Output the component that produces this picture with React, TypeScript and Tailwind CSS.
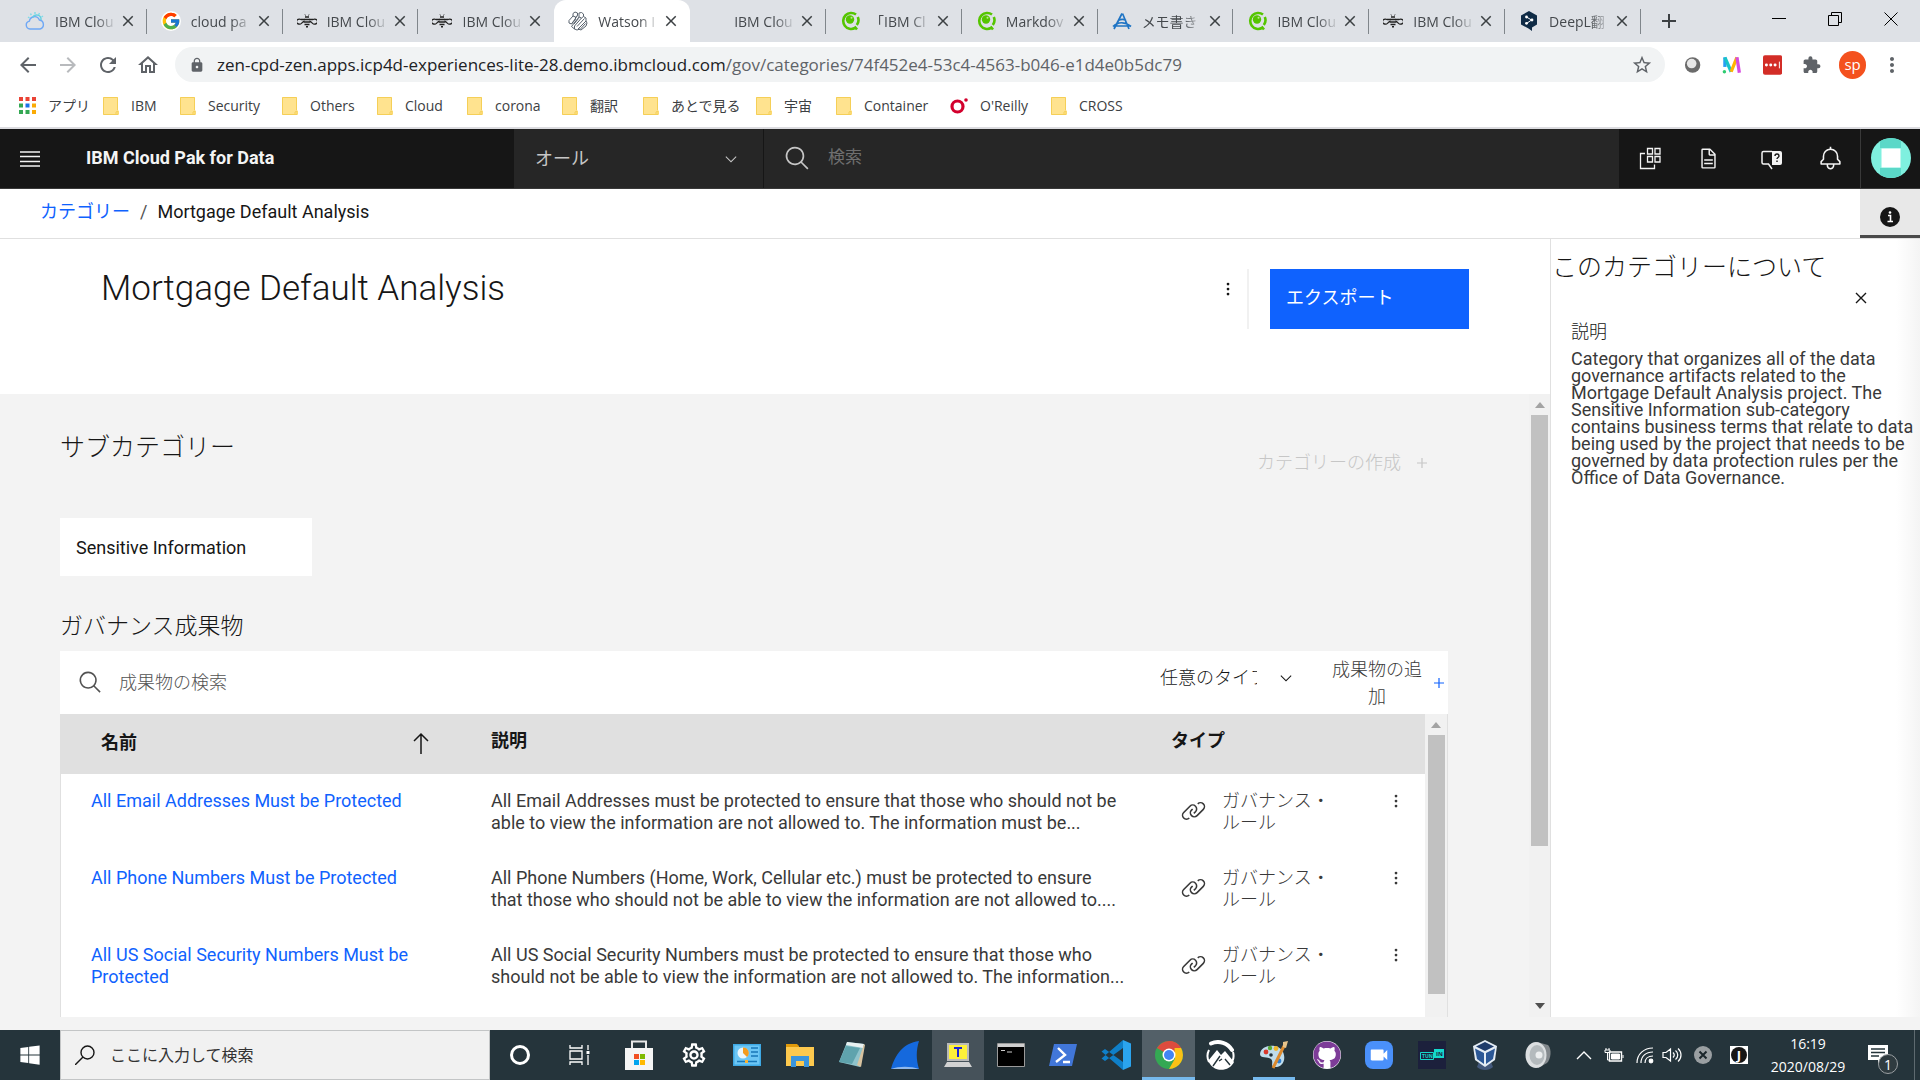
import { type ReactNode } from "react";
import { FaGithub, FaWindows } from "react-icons/fa";
import { FcGoogle } from "react-icons/fc";
import {
  MdArrowBack,
  MdArrowForward,
  MdClose,
  MdExtension,
  MdLock,
  MdMoreVert,
  MdOutlineHome,
  MdOutlineSettings,
  MdRefresh,
  MdStarBorder,
  MdVideocam,
} from "react-icons/md";

const CLOUD_ICON = (
  <svg viewBox="0 0 20 20" className="w-5 h-5" fill="none" strokeWidth="1.4">
    <path d="M5 18a4 4 0 0 1-.6-7.900A5.200 5.200 0 0 1 14.400 9 4.600 4.600 0 0 1 15 18z" stroke="#6fa8f5" />
    <path d="M7.500 6.500A4.500 4.500 0 0 1 16 9" stroke="#63d0e0" />
    <path d="M3 6l1.500 1M5.500 2.500l.8 1.600M10 1v2M14.500 2l-1 2M18 5l-1.500 1" stroke="#7fdbe6" />
  </svg>
);

const BEE_ICON = (
  <svg viewBox="0 0 20 20" className="w-5 h-5" fill="none" stroke="#222">
    <path d="M7.500 8.500H4A3 2.500 0 1 0 3.500 13C5 12.500 5 11 7.500 10M12.500 8.500H16A3 2.500 0 1 1 16.500 13C15 12.500 15 11 12.500 10" strokeWidth="1.300" />
    <path d="M8 6h4M7 8.500h6M6.500 11h7M7.500 13.500h5M9 15.800h2" strokeWidth="1.500" />
    <path d="M8.500 4.500L8 3.500M11.500 4.500l.5-1" />
  </svg>
);

const WATSON_ICON = (
  <svg viewBox="0 0 20 20" className="w-5 h-5" fill="none" stroke="#59636e">
    <path d="M5 2.500L7 1l2.500 1v2.500l-2 1.500L5 5zM11 2l2.500-.5 2 1.500v2.500l-2 1.500-2.500-1z" />
    <path d="M5 5L1 9.500V12l2.500 1 4-4.500V6M9.500 4.500l-6 8.500M13.500 7l-7 8v3l2.500 1 3-1M11 6l-7.500 9.500L6.500 18M15.500 5.500L18 7v3l-8 8" />
    <path d="M16.500 7.500L9 15.500M18 10l1 2-1 3-5 4-2.500-1M17.500 12.500l-5 5.500M10.500 7.500L6 13" />
  </svg>
);

const QIITA_ICON = (
  <svg viewBox="0 0 20 20" className="w-5 h-5" fill="none">
    <path d="M16 3.500A8 8 0 1 0 15 17M17.800 6a8 8 0 0 1-1 8M14.500 15.500l2.500 3" stroke="#55c500" strokeWidth="2.600" />
    <circle cx="10" cy="8.500" r="4.200" fill="#55c500" />
    <circle cx="11.500" cy="6.800" r="1" fill="#b6ea8c" />
  </svg>
);

const MEMO_ICON = (
  <svg viewBox="0 0 20 20" className="w-5 h-5" fill="none" stroke="#1f74c4" strokeWidth="1.700">
    <path d="M2 18L10 2.500M10.500 2.500L17 18M1 15.500C6 10.500 13 10.500 19 15.500M6 9.500c3-1.500 6-1.500 8 0M6.500 9.500L4 15h13" />
  </svg>
);

const DEEPL_ICON = (
  <svg viewBox="0 0 20 20" className="w-5 h-5">
    <path d="M10 0l8 4.500v9L13 16.500V20l-3.500-2.500L2 13.500v-9z" fill="#0f2b46" />
    <path d="M7.500 6l5 3-5 3.500" stroke="#fff" strokeWidth="1" fill="none" />
    <circle cx="7.500" cy="6" r="1.400" fill="#fff" />
    <circle cx="13" cy="9" r="1.400" fill="#fff" />
    <circle cx="7.500" cy="12.300" r="1.400" fill="#fff" />
  </svg>
);

const TABS: { title: string; icon: ReactNode; active?: boolean; divider?: boolean }[] = [
  { title: "IBM Clou", icon: CLOUD_ICON, divider: true },
  { title: "cloud pa", icon: <FcGoogle className="w-5 h-5 rounded-full bg-white" />, divider: true },
  { title: "IBM Clou", icon: BEE_ICON, divider: true },
  { title: "IBM Clou", icon: BEE_ICON },
  { title: "Watson I", icon: WATSON_ICON, active: true },
  { title: "IBM Clou", icon: null, divider: true },
  { title: "「IBM Cl", icon: QIITA_ICON, divider: true },
  { title: "Markdov", icon: QIITA_ICON, divider: true },
  { title: "メモ書き", icon: MEMO_ICON, divider: true },
  { title: "IBM Clou", icon: QIITA_ICON, divider: true },
  { title: "IBM Clou", icon: BEE_ICON, divider: true },
  { title: "DeepL翻", icon: DEEPL_ICON, divider: true },
];

function FolderIcon() {
  return (
    <svg viewBox="0 0 16 18" className="w-4 h-[18px]">
      <path d="M1 0h13a1 1 0 0 1 1 1v12l1 1v3a1 1 0 0 1-1 1H1a1 1 0 0 1-1-1V1a1 1 0 0 1 1-1z" fill="#ffe38f" />
      <path d="M.5.5h14v12.500M.5.500v17h14.500v-3.500l-2 1v2" stroke="#f5cf57" fill="none" />
    </svg>
  );
}

const APPS_ICON = (
  <svg viewBox="0 0 17 17" className="w-[17px] h-[17px]">
    <path d="M0 0h4v4H0zM6.500 0h4v4h-4zM13 0h4v4h-4z" fill="#ea4335" />
    <path d="M0 6.500h4v4H0zM0 13h4v4H0zM6.500 13h4v4h-4z" fill="#34a853" />
    <path d="M6.500 6.500h4v4h-4z" fill="#1a73e8" />
    <path d="M13 6.500h4v4h-4zM13 13h4v4h-4z" fill="#fbab05" />
  </svg>
);

const OREILLY_ICON = (
  <svg viewBox="0 0 18 18" className="w-[18px] h-[18px]">
    <circle cx="7.500" cy="9.500" r="5.500" fill="none" stroke="#d3002d" strokeWidth="3.200" />
    <circle cx="16" cy="3" r="1.800" fill="#d3002d" />
  </svg>
);

const BOOKMARKS = [
  { label: "アプリ", width: "w-[84px]", icon: APPS_ICON },
  { label: "IBM", width: "w-[77px]" },
  { label: "Security", width: "w-[102px]" },
  { label: "Others", width: "w-[95px]" },
  { label: "Cloud", width: "w-[90px]" },
  { label: "corona", width: "w-[95px]" },
  { label: "翻訳", width: "w-[81px]" },
  { label: "あとで見る", width: "w-[113px]" },
  { label: "宇宙", width: "w-[80px]" },
  { label: "Container", width: "w-[114px]" },
  { label: "O'Reilly", width: "w-[101px]", icon: OREILLY_ICON },
  { label: "CROSS", width: "w-[80px]" },
];

function TabStrip() {
  return (
    <div className="flex h-[42px] bg-[#dee1e6] pl-[11px]">
      <div className="flex flex-1 min-w-0">
        {TABS.map((tab, i) => (
          <div
            key={i}
            className={`relative flex flex-1 min-w-0 items-center pl-[14px] ${tab.active ? "bg-white rounded-t-xl" : ""}`}
          >
            <span className="w-5 h-5 shrink-0">{tab.icon}</span>
            <span className="ml-[10px] w-[62px] whitespace-nowrap text-[14px] text-[#45494d] [mask-image:linear-gradient(to_right,black_65%,transparent)]">
              {tab.title}
            </span>
            <button aria-label="Close tab" className="ml-[2px] shrink-0">
              <MdClose className="w-[18px] h-[18px] text-[#3c4043]" />
            </button>
            {tab.divider && <span className="absolute right-0 top-[9px] h-[25px] w-px bg-[#80868b]" />}
          </div>
        ))}
      </div>
      <div className="flex w-[279px] items-center">
        <button aria-label="New tab" className="ml-5">
          <svg viewBox="0 0 16 16" className="w-4 h-4">
            <path d="M8 1v14M1 8h14" stroke="#3c4043" strokeWidth="2" />
          </svg>
        </button>
        <div className="ml-auto mb-[5px] flex items-center gap-[42px] pr-[22px]">
          <button aria-label="Minimize">
            <svg viewBox="0 0 14 14" className="w-[14px] h-[14px]">
              <path d="M0 6.500h14" stroke="#000" />
            </svg>
          </button>
          <button aria-label="Restore">
            <svg viewBox="0 0 14 14" className="w-[14px] h-[14px]" fill="none" stroke="#000">
              <path d="M.5 3.500h10v10H.5zM3.500 3.500v-3h10v10h-3" />
            </svg>
          </button>
          <button aria-label="Close window">
            <svg viewBox="0 0 14 14" className="w-[14px] h-[14px]">
              <path d="M.5.5l13 13M13.500.5l-13 13" stroke="#000" />
            </svg>
          </button>
        </div>
      </div>
    </div>
  );
}

function Toolbar() {
  return (
    <div className="flex h-[45px] items-center bg-white pl-4 pr-4 text-[#5f6368]">
      <div className="flex w-[159px] items-center gap-4">
        <button aria-label="Back"><MdArrowBack className="w-6 h-6" /></button>
        <button aria-label="Forward"><MdArrowForward className="w-6 h-6 text-[#b8babd]" /></button>
        <button aria-label="Reload"><MdRefresh className="w-6 h-6" /></button>
        <button aria-label="Home"><MdOutlineHome className="w-6 h-6" /></button>
      </div>
      <div className="flex h-[35px] flex-1 items-center rounded-full bg-[#f1f3f4] pl-[14px] pr-3">
        <MdLock className="w-4 h-4 shrink-0" />
        <p className="ml-3 flex-1 whitespace-nowrap text-[17px]">
          <span className="text-[#202124]">zen-cpd-zen.apps.icp4d-experiences-lite-28.demo.ibmcloud.com</span>
          /gov/categories/74f452e4-53c4-4563-b046-e1d4e0b5dc79
        </p>
        <button aria-label="Bookmark"><MdStarBorder className="w-[22px] h-[22px]" /></button>
      </div>
      <div className="flex w-[239px] items-center pl-[18px]">
        <svg viewBox="0 0 20 20" className="w-5 h-5">
          <circle cx="10" cy="10" r="8" fill="#6b6b6b" />
          <circle cx="9" cy="8.500" r="5" fill="#e8e8e8" />
        </svg>
        <svg viewBox="0 0 20 20" className="ml-5 w-5 h-5" fill="none" strokeWidth="3.400">
          <path d="M3 12V2" stroke="#2a9df4" />
          <path d="M3 2l6.500 15" stroke="#18c3c9" />
          <path d="M9.500 17L15.500 2" stroke="#ffb300" />
          <path d="M15.500 2l2.500 16" stroke="#d64be0" />
          <circle cx="2.500" cy="17" r="1.800" fill="#2ecc71" />
        </svg>
        <svg viewBox="0 0 20 20" className="ml-[21px] w-5 h-5">
          <rect width="20" height="20" rx="2" fill="#d32d27" />
          <path d="M3.500 10h.1M8 10h.1M12.500 10h.1" stroke="#fff" strokeWidth="3" strokeLinecap="round" />
          <path d="M17 6.500v7" stroke="#fff" />
        </svg>
        <MdExtension className="ml-5 w-5 h-5" />
        <span className="ml-[18px] flex w-7 h-7 items-center justify-center rounded-full bg-[#f4511e] pb-px text-[15px] text-white">sp</span>
        <button aria-label="Menu" className="ml-[14px]"><MdMoreVert className="w-6 h-6" /></button>
      </div>
    </div>
  );
}

function BookmarksBar() {
  return (
    <div className="flex h-[42px] items-center border-b-2 border-[#dcdce0] bg-white pb-[3px] pl-[19px]">
      {BOOKMARKS.map((b) => (
        <a
          key={b.label}
          href="#"
          className={`flex shrink-0 items-center gap-3 whitespace-nowrap text-[14px] text-[#3c4043] ${b.width}`}
        >
          {b.icon ?? <FolderIcon />}
          {b.label}
        </a>
      ))}
    </div>
  );
}

function SearchIcon({ className }: { className: string }) {
  return (
    <svg viewBox="0 0 32 32" fill="currentColor" className={className}>
      <path d="M29 27.586l-7.552-7.552a11.018 11.018 0 1 0-1.414 1.414L27.586 29zM4 13a9 9 0 1 1 9 9 9.010 9.010 0 0 1-9-9z" />
    </svg>
  );
}

function ChevronIcon({ className }: { className: string }) {
  return (
    <svg viewBox="0 0 32 32" fill="currentColor" className={className}>
      <path d="M16 23L5 12l1.400-1.400 9.600 9.600 9.600-9.600L27 12z" />
    </svg>
  );
}

function LinkIcon() {
  return (
    <svg viewBox="0 0 32 32" fill="currentColor" className="w-[25px] h-[25px] shrink-0">
      <path d="M29.250 6.760a6 6 0 0 0-8.500 0l1.420 1.420a4 4 0 1 1 5.670 5.670l-8 8a4 4 0 1 1-5.670-5.660l1.410-1.420-1.410-1.420-1.420 1.420a6 6 0 0 0 0 8.500A6 6 0 0 0 17 25a6 6 0 0 0 4.270-1.760l8-8a6 6 0 0 0-.02-8.480z" />
      <path d="M4.190 24.820a4 4 0 0 1 0-5.670l8-8a4 4 0 0 1 5.670 0A3.940 3.940 0 0 1 19 14a4 4 0 0 1-1.170 2.850L15.710 19l1.420 1.420 2.120-2.120a6 6 0 0 0-8.510-8.510l-8 8a6 6 0 0 0 0 8.510A6 6 0 0 0 7 28a6.070 6.070 0 0 0 4.280-1.760l-1.420-1.420a4 4 0 0 1-5.670 0z" />
    </svg>
  );
}

function OverflowIcon() {
  return (
    <svg viewBox="0 0 32 32" fill="currentColor" className="w-5 h-5">
      <circle cx="16" cy="8" r="2.200" />
      <circle cx="16" cy="16" r="2.200" />
      <circle cx="16" cy="24" r="2.200" />
    </svg>
  );
}

function PlusIcon() {
  return (
    <svg viewBox="0 0 10 10" className="w-[10px] h-[10px] shrink-0">
      <path d="M5 0v10M0 5h10" stroke="currentColor" strokeWidth="1.200" />
    </svg>
  );
}

function AppHeader() {
  return (
    <header className="flex h-[60px] shrink-0 items-stretch border-b border-[#393939] bg-[#161616] text-[#f4f4f4]">
      <div className="flex w-[514px] items-center pl-5">
        <button aria-label="Open menu">
          <svg viewBox="0 0 20 16" className="w-5 h-4">
            <path d="M0 1h20M0 5.500h20M0 10.500h20M0 15h20" stroke="#f4f4f4" strokeWidth="1.400" />
          </svg>
        </button>
        <span className="ml-[46px] pb-[2px] text-[18px] font-bold">IBM Cloud Pak for Data</span>
      </div>
      <button className="flex w-[250px] items-center justify-between border-r border-[#161616] bg-[#262626] pl-[21px] pr-6 text-[18px] text-[#c6c6c6]">
        オール
        <ChevronIcon className="w-4 h-4" />
      </button>
      <label className="flex flex-1 items-center bg-[#262626] pl-5 text-[#c6c6c6]">
        <SearchIcon className="w-[27px] h-[27px]" />
        <input
          aria-label="検索"
          placeholder="検索"
          className="ml-[17px] flex-1 bg-transparent pb-[2px] text-[17px] outline-none placeholder:text-[#6f6f6f]"
        />
      </label>
      <div className="flex w-[241px] items-center justify-around pl-[2px]">
        <button aria-label="Services">
          <svg viewBox="0 0 24 24" className="w-6 h-6" fill="none" stroke="currentColor" strokeWidth="1.300">
            <path d="M9.500 1.500h5v5.500h-5zM17 1.500h5v5.500h-5zM9.500 9.500h5v5.500h-5zM17 9.500h5v5.500h-5zM7 6.500H2.500v15h14v-4" />
          </svg>
        </button>
        <button aria-label="Docs">
          <svg viewBox="0 0 32 32" className="w-[23px] h-[23px]" fill="currentColor">
            <path d="M25.700 9.300l-7-7A1 1 0 0 0 18 2H8a2 2 0 0 0-2 2v24a2 2 0 0 0 2 2h16a2 2 0 0 0 2-2V10a1 1 0 0 0-.3-.7zM18 4.400l5.600 5.600H18zM24 28H8V4h8v6a2 2 0 0 0 2 2h6zM10 22h12v2H10zM10 17h12v2H10z" />
          </svg>
        </button>
        <button aria-label="Help" className="pl-1 pt-[2px]">
          <svg viewBox="0 0 24 24" className="w-6 h-6">
            <path d="M13 3.500H4.500A1.500 1.500 0 0 0 3 5v9.500A1.500 1.500 0 0 0 4.500 16H9.500l3.500 5" fill="none" stroke="currentColor" strokeWidth="1.500" />
            <path d="M13 3h8a2 2 0 0 1 2 2v10a2 2 0 0 1-2 2h-8z" fill="currentColor" />
            <path d="M16 8c0-2.600 4-2.600 4 0 0 1.500-2 1.500-2 3M18 12.500v1.500" stroke="#161616" strokeWidth="1.400" fill="none" />
          </svg>
        </button>
        <button aria-label="Notifications">
          <svg viewBox="0 0 32 32" className="w-[25px] h-[25px]" fill="currentColor">
            <path d="M28.710 19.290L26 16.590V13a10 10 0 0 0-9-9.950V1h-2v2.050A10 10 0 0 0 6 13v3.590l-2.710 2.700A1 1 0 0 0 3 20v3a1 1 0 0 0 1 1h7v.78a5.150 5.150 0 0 0 4.500 5.190A5 5 0 0 0 21 25v-1h7a1 1 0 0 0 1-1v-3a1 1 0 0 0-.29-.71zM19 25a3 3 0 0 1-6 0v-1h6zm8-3H5v-1.590l2.710-2.700A1 1 0 0 0 8 17v-4a8 8 0 0 1 16 0v4a1 1 0 0 0 .29.71l2.710 2.700z" />
          </svg>
        </button>
      </div>
      <button aria-label="Profile" className="flex w-[60px] items-center justify-center border-l border-[#393939] pb-[2px]">
        <svg viewBox="0 0 40 40" className="w-10 h-10">
          <circle cx="20" cy="20" r="20" fill="#7ff0df" />
          <path d="M9 3.300A20 20 0 0 1 30 2.700V10H9zM9 30h21v7.300a20 20 0 0 1-21-.6z" fill="#5bd8c8" />
          <path d="M10.500 10.500h19v19h-19z" fill="#fff" />
        </svg>
      </button>
    </header>
  );
}

function Breadcrumb() {
  return (
    <nav className="flex h-[50px] shrink-0 border-b border-[#e0e0e0] bg-white pl-10 text-[18px] text-[#161616]">
      <div className="flex flex-1 items-center gap-[10px] pb-[4px]">
        <a href="#" className="text-[#0f62fe]">カテゴリー</a>
        <span className="text-[#525252]">/</span>
        <span>Mortgage Default Analysis</span>
      </div>
      <button aria-label="Information" className="flex w-[60px] items-center justify-center border-b-[3px] border-[#4a4a4a] bg-[#e8e8e8] pt-[9px]">
        <svg viewBox="0 0 20 20" className="w-5 h-5">
          <circle cx="10" cy="10" r="10" fill="#161616" />
          <path d="M8 8.500h2.500v6M7.500 14.500h5.500" stroke="#fff" strokeWidth="1.600" fill="none" />
          <circle cx="10" cy="5.500" r="1.300" fill="#fff" />
        </svg>
      </button>
    </nav>
  );
}

function ScrollArrow({ down }: { down?: boolean }) {
  return (
    <svg viewBox="0 0 10 6" className="w-[10px] h-[6px] shrink-0">
      {down ? <path d="M0 0h10L5 6z" fill="#505050" /> : <path d="M0 6h10L5 0z" fill="#a3a3a3" />}
    </svg>
  );
}

const ARTIFACTS = [
  {
    name: ["All Email Addresses Must be Protected"],
    description: [
      "All Email Addresses must be protected to ensure that those who should not be",
      "able to view the information are not allowed to. The information must be...",
    ],
  },
  {
    name: ["All Phone Numbers Must be Protected"],
    description: [
      "All Phone Numbers (Home, Work, Cellular etc.) must be protected to ensure",
      "that those who should not be able to view the information are not allowed to....",
    ],
  },
  {
    name: ["All US Social Security Numbers Must be", "Protected"],
    description: [
      "All US Social Security Numbers must be protected to ensure that those who",
      "should not be able to view the information are not allowed to. The information...",
    ],
  },
];

function Lines({ text }: { text: string[] }) {
  return (
    <>
      {text.map((line) => (
        <span key={line} className="block whitespace-nowrap">{line}</span>
      ))}
    </>
  );
}

function ArtifactTable() {
  return (
    <div className="flex min-h-0 flex-1 bg-white">
      <div className="min-w-0 flex-1 overflow-hidden border-l border-[#e0e0e0]">
        <table className="w-full table-fixed text-left text-[18px] leading-[22px] text-[#393939]">
          <thead>
            <tr className="h-[60px] bg-[#e0e0e0] align-top text-[#161616]">
              <th className="w-[430px] pl-10 pt-[18px] font-bold">
                <span className="flex items-center justify-between pr-[61px]">
                  名前
                  <svg viewBox="0 0 18 22" className="w-[18px] h-[22px]" fill="none" stroke="#161616" strokeWidth="1.500">
                    <path d="M9 22V2M2 9l7-7 7 7" />
                  </svg>
                </span>
              </th>
              <th className="pt-4 font-bold">説明</th>
              <th className="w-[254px] pt-4 font-bold">タイプ</th>
            </tr>
          </thead>
          <tbody>
            {ARTIFACTS.map((a) => (
              <tr key={a.name[0]} className="h-[77px] align-top">
                <td className="pl-[30px] pt-4 text-[#0f62fe]">
                  <a href="#"><Lines text={a.name} /></a>
                </td>
                <td className="pt-4">
                  <Lines text={a.description} />
                </td>
                <td className="pt-4">
                  <div className="flex pl-[10px]">
                    <span className="mt-2"><LinkIcon /></span>
                    <span className="ml-4 w-[164px] font-light">
                      <Lines text={["ガバナンス・", "ルール"]} />
                    </span>
                    <button aria-label="Row menu" className="mt-px self-start"><OverflowIcon /></button>
                  </div>
                </td>
              </tr>
            ))}
          </tbody>
        </table>
      </div>
      <div className="flex w-[23px] flex-col items-center border-r border-[#e0e0e0] bg-[#f1f1f1] pt-2 pb-[23px]">
        <ScrollArrow />
        <div className="mt-[7px] w-[17px] flex-1 bg-[#c1c1c1]" />
      </div>
    </div>
  );
}

function CategoryContent() {
  return (
    <div className="flex min-h-0 flex-1">
      <div className="flex min-w-0 flex-1 flex-col pl-[60px] pr-[81px]">
        <div className="flex h-[124px] justify-between pr-[21px]">
          <h2 className="pt-[34px] text-[25px] font-light leading-[40px]">サブカテゴリー</h2>
          <button disabled className="flex items-center gap-4 self-start pt-[58px] text-[18px] font-light leading-[22px] text-[#c6c6c6]">
            カテゴリーの作成
            <PlusIcon />
          </button>
        </div>
        <a href="#" className="flex h-[58px] w-[252px] items-center bg-white pl-4 text-[18px] text-[#161616]">
          Sensitive Information
        </a>
        <h2 className="mt-8 h-[43px] text-[23px] font-light leading-[38px]">ガバナンス成果物</h2>
        <div className="flex h-[63px] shrink-0 items-center bg-white">
          <label className="flex flex-1 items-center pl-[18px] text-[#525252]">
            <SearchIcon className="w-[25px] h-[25px]" />
            <input
              aria-label="成果物の検索"
              placeholder="成果物の検索"
              className="ml-4 flex-1 bg-transparent text-[18px] font-light outline-none placeholder:text-[#525252]"
            />
          </label>
          <button className="flex w-[166px] items-center justify-between pb-[10px] pr-8 text-[18px] font-light">
            <span className="w-[97px] overflow-hidden whitespace-nowrap">任意のタイプ</span>
            <ChevronIcon className="w-4 h-4" />
          </button>
          <button className="flex w-[122px] items-center justify-end gap-3 pr-1 text-[#0f62fe]">
            <span className="w-[90px] text-[18px] font-light leading-[27px] text-[#393939]">成果物の追加</span>
            <PlusIcon />
          </button>
        </div>
        <ArtifactTable />
      </div>
      <div className="flex w-[21px] flex-col items-center bg-[#f1f1f1] pt-2 pb-2">
        <ScrollArrow />
        <div className="mt-[7px] w-[17px] grow-[430] bg-[#c1c1c1]" />
        <div className="grow-[157]" />
        <ScrollArrow down />
      </div>
    </div>
  );
}

function AboutPanel() {
  return (
    <aside className="w-[370px] shrink-0 border-l border-[#e0e0e0] bg-[linear-gradient(to_left,#f4f4f4,white_24px)] pt-[9px] text-[#161616]">
      <h2 className="pl-px text-[25px] font-light leading-[40px]">このカテゴリーについて</h2>
      <div className="flex justify-end pr-[53px] pt-1">
        <button aria-label="Close panel">
          <svg viewBox="0 0 12 12" className="w-3 h-3">
            <path d="M1 1l10 10M11 1L1 11" stroke="#161616" strokeWidth="1.400" />
          </svg>
        </button>
      </div>
      <div className="pl-5 pt-4">
        <h3 className="text-[18px] font-light leading-[24px]">説明</h3>
        <p className="pt-[6px] text-[18px] leading-[17px] text-[#393939]">
          <Lines
            text={[
              "Category that organizes all of the data",
              "governance artifacts related to the",
              "Mortgage Default Analysis project. The",
              "Sensitive Information sub-category",
              "contains business terms that relate to data",
              "being used by the project that needs to be",
              "governed by data protection rules per the",
              "Office of Data Governance.",
            ]}
          />
        </p>
      </div>
    </aside>
  );
}

const CHROME_ICON = (
  <svg viewBox="0 0 28 28" className="w-7 h-7">
    <circle cx="14" cy="14" r="14" fill="#34a853" />
    <path d="M14 14L1.900 7A14 14 0 0 1 26.100 7z" fill="#dd4b3e" />
    <path d="M14 0a14 14 0 0 1 12.100 7H14z" fill="#dd4b3e" />
    <path d="M26.100 7A14 14 0 0 1 14 28l6-10.500L19.500 7z" fill="#fbc116" />
    <circle cx="14" cy="14" r="6.500" fill="#fff" />
    <circle cx="14" cy="14" r="5" fill="#4285f4" />
  </svg>
);

const TASKBAR_APPS: { name: string; icon: ReactNode; highlight?: string; mark?: string }[] = [
  {
    name: "Settings",
    icon: <MdOutlineSettings className="w-7 h-7 text-white" />,
  },
  {
    name: "Control Panel",
    icon: (
      <svg viewBox="0 0 28 22" className="w-7 h-[22px]">
        <path d="M0 0h28v22H0z" fill="#3ea9e5" />
        <path d="M1.500 1.500h25v19h-25z" fill="#6cc6f5" />
        <circle cx="10" cy="9" r="5.500" fill="#eaf6fd" />
        <path d="M10 9V3.500A5.500 5.500 0 0 1 14 13z" fill="#f39b1f" />
        <path d="M18 4h7M18 8h7M18 12h7M4 17.500h20" stroke="#1777b8" strokeWidth="1.500" />
        <path d="M12 16h3v3h-3z" fill="#f9b233" />
      </svg>
    ),
  },
  {
    name: "Explorer",
    icon: (
      <svg viewBox="0 0 28 24" className="w-7 h-6">
        <path d="M0 1h11l2 2v3H0z" fill="#e09a0b" />
        <path d="M0 4h28v19H0z" fill="#fdc94e" />
        <path d="M5 24V13h18v11h-5v-6h-8v6z" fill="#3b95dc" />
      </svg>
    ),
  },
  {
    name: "Notepad",
    icon: (
      <svg viewBox="0 0 28 28" className="w-7 h-7">
        <path d="M9 1l17 2-4 23L1 21z" fill="#8fc3cb" />
        <path d="M9 1l17 2-1 4L8 4z" fill="#e9f1f1" />
        <path d="M26 3l1 1-4 22-4-2z" fill="#d8c3a0" />
        <path d="M8 5l14 2-8 16L1 21z" fill="#5fa3ad" />
      </svg>
    ),
  },
  {
    name: "Wireshark",
    icon: (
      <svg viewBox="0 0 28 28" className="w-7 h-7">
        <path d="M0 28C4 14 12 2 28 0c-3 9-3 19 0 28z" fill="#1569dd" />
        <path d="M0 28c8-3 20-3 28 0z" fill="#8fb9ee" />
      </svg>
    ),
  },
  {
    name: "Tera Term",
    highlight: "bg-[#46525a]",
    icon: (
      <svg viewBox="0 0 28 28" className="w-7 h-7">
        <path d="M3 2h22v18H3z" fill="#b9b9b9" />
        <path d="M5 4h18v14H5z" fill="#fdf03a" />
        <path d="M3 21h22l3 5H0z" fill="#d2d2d2" />
        <path d="M10 7h8M14 7v9" stroke="#1a22d8" strokeWidth="2" />
      </svg>
    ),
  },
  {
    name: "Command Prompt",
    icon: (
      <svg viewBox="0 0 28 24" className="w-7 h-6">
        <path d="M.5.5h27v23H.5z" fill="#000" stroke="#9a9a9a" />
        <path d="M1 1h26v3H1z" fill="#cfcfcf" />
        <path d="M4 7.500h4M10 9h5" stroke="#ccc" />
      </svg>
    ),
  },
  {
    name: "PowerShell",
    icon: (
      <svg viewBox="0 0 28 22" className="w-7 h-[22px]">
        <path d="M5 0h23l-5 22H0z" fill="#4176d8" />
        <path d="M9 4l7 7-9 7M14 18h7" stroke="#fff" strokeWidth="2.400" fill="none" />
      </svg>
    ),
  },
  {
    name: "VS Code",
    icon: (
      <svg viewBox="0 0 30 30" className="w-[30px] h-[30px]">
        <path d="M22 0v8L4 21l-3.500-2.500zM22 30v-8L4 9 .5 11.500z" fill="#0f7fc8" />
        <path d="M22 0l8 3.500v23L22 30z" fill="#2ba4ee" />
      </svg>
    ),
  },
  { name: "Chrome", icon: CHROME_ICON, highlight: "bg-[#536068]", mark: "w-full" },
  {
    name: "Photos",
    icon: (
      <svg viewBox="0 0 30 30" className="w-[30px] h-[30px]" fill="none">
        <path d="M5 3.500c8-3.500 17-.5 21 6.500" stroke="#fff" strokeWidth="4" strokeLinecap="round" />
        <path d="M3 10a13 13 0 0 0 0 12M27 12a12.500 12.500 0 0 1-4 13" stroke="#fff" strokeWidth="2" />
        <path d="M2 21l9-11 4 5 4-4 9 11c-4 9-18 11-24 2z" fill="#fff" />
        <path d="M7 26l7-10M13 21l3-2M19 19l5 6" stroke="#25343a" strokeWidth="1.400" />
      </svg>
    ),
  },
  {
    name: "Paint",
    mark: "w-[42px]",
    icon: (
      <svg viewBox="0 0 30 30" className="w-[30px] h-[30px]">
        <path d="M1 14C2 4 20 3 24 12s-2 16-9 15c-4-1 0-5-3-8s-11 0-11-5z" fill="#bfdcec" />
        <circle cx="7" cy="12" r="2.400" fill="#d9382c" />
        <circle cx="11" cy="8" r="2.200" fill="#58a838" />
        <circle cx="17" cy="8.500" r="2.400" fill="#f0b429" />
        <circle cx="12" cy="15" r="1.800" fill="#22303a" />
        <circle cx="20" cy="21" r="2.400" fill="#2f7fd1" />
        <path d="M14 28L25 6" stroke="#dd8a2e" strokeWidth="3" />
        <path d="M24 2l5-1-2 7-3-1z" fill="#e8c48a" />
      </svg>
    ),
  },
  {
    name: "GitHub Desktop",
    icon: (
      <span className="flex w-7 h-7 items-center justify-center rounded-full bg-white">
        <FaGithub className="w-7 h-7 text-[#7d3c98]" />
      </span>
    ),
  },
  {
    name: "Zoom",
    icon: (
      <span className="flex w-7 h-7 items-center justify-center rounded-lg bg-[#4a90fa]">
        <MdVideocam className="w-[22px] h-[22px] text-white" />
      </span>
    ),
  },
  {
    name: "TuneIn",
    icon: (
      <span className="flex w-7 h-7 items-center justify-center bg-[#1c203c]">
        <svg viewBox="0 0 24 12" className="w-6 h-3">
          <path d="M.5 3.500h13v7H.5z" fill="none" stroke="#14d8cc" />
          <path d="M14 0h10v9H14z" fill="#14d8cc" />
          <text x="2" y="9" fontSize="5" fontWeight="bold" fill="#14d8cc">TUNE</text>
          <text x="16" y="7" fontSize="6" fontWeight="bold" fill="#1c203c">IN</text>
        </svg>
      </span>
    ),
  },
  {
    name: "VirtualBox",
    icon: (
      <svg viewBox="0 0 28 30" className="w-7 h-[30px]">
        <path d="M8 22h12l2 5c-4 4-12 4-16 0z" fill="#44597c" />
        <path d="M14 0l12 6-2 14-10 7L4 20 2 6z" fill="#e4ecf4" />
        <path d="M14 2l9 4.500-9 4.500-9-4.500z" fill="#1f3c6b" />
        <path d="M4 8.500l9 4.500v11l-7-5zM24 8.500L15 13v11l7-5z" fill="#2b5796" />
      </svg>
    ),
  },
  {
    name: "Sound",
    icon: (
      <svg viewBox="0 0 28 28" className="w-7 h-7">
        <path d="M13 1l11 3c4 4 3 14-1 18l-9 5z" fill="#82888c" />
        <ellipse cx="12" cy="14" rx="10.500" ry="13" fill="#dcdfe1" />
        <ellipse cx="13" cy="14" rx="7.500" ry="10" fill="#b4babd" />
        <circle cx="15" cy="14" r="3.500" fill="#eceeef" />
      </svg>
    ),
  },
];

function SystemTray() {
  return (
    <div className="flex w-[356px] shrink-0 items-center text-white">
      <svg viewBox="0 0 16 10" className="ml-3 w-4 h-[10px]" fill="none" stroke="currentColor" strokeWidth="1.400">
        <path d="M1 9l7-7 7 7" />
      </svg>
      <svg viewBox="0 0 20 16" className="ml-3 w-5 h-4" fill="none" stroke="currentColor">
        <path d="M5.500 5h12v9h-12z" strokeWidth="1.400" />
        <path d="M7.500 7h8v5h-8z" fill="currentColor" />
        <path d="M19 8v3M1 3h5v2.500H1zM2 1v2M5 1v2M3.500 6v7h2" />
      </svg>
      <svg viewBox="0 0 18 18" className="ml-3 w-[18px] h-[18px]" fill="none" stroke="currentColor" strokeWidth="1.200">
        <path d="M1 17C1 8 8 2 17 2M5 17C5 10 10 6 17 6M9 17c0-4 3-7 8-7" />
        <circle cx="15" cy="15" r="1.800" fill="currentColor" />
      </svg>
      <svg viewBox="0 0 20 18" className="ml-2 w-5 h-[18px]" fill="none" stroke="currentColor" strokeWidth="1.200">
        <path d="M1 6.500h3L8.500 3v12L4 11.500H1zM11 6.500c1.500 1.500 1.500 3.500 0 5M13.500 4.500c3 2.500 3 6.500 0 9M16 2.500c4 3.500 4 9.500 0 13" />
      </svg>
      <svg viewBox="0 0 18 18" className="ml-3 w-[18px] h-[18px]">
        <circle cx="9" cy="9" r="9" fill="#9a9fa2" />
        <path d="M5.500 5.500l7 7M12.500 5.500l-7 7" stroke="#1b262b" strokeWidth="2" />
      </svg>
      <span className="ml-[18px] flex w-[18px] h-[18px] items-center justify-center bg-white">
        <span className="flex w-4 h-4 items-center justify-center rounded-full bg-[#161616] text-[13px] font-bold leading-4">J</span>
      </span>
      <div className="ml-5 w-[80px] text-center text-[14px] leading-[23px]">
        <div>16:19</div>
        <div className="whitespace-nowrap">2020/08/29</div>
      </div>
      <div className="relative ml-5">
        <svg viewBox="0 0 20 20" className="w-5 h-5">
          <path d="M0 0h20v15h-7l-3 4v-4H0z" fill="#fff" />
          <path d="M3 4h14M3 7.500h14M3 11h8" stroke="#25343a" strokeWidth="1.400" />
        </svg>
        <span className="absolute left-[10px] top-[9px] flex w-5 h-5 items-center justify-center rounded-full border border-[#9a9fa2] bg-[#2f3b40] text-[14px]">
          1
        </span>
      </div>
      <span className="ml-auto mr-[5px] h-full w-px bg-[#5e6a70]" />
    </div>
  );
}

function Taskbar() {
  return (
    <footer className="flex h-[50px] shrink-0 bg-[#25343b]">
      <button aria-label="Start" className="flex w-[60px] items-center justify-center">
        <FaWindows className="w-[22px] h-[22px] text-white" />
      </button>
      <label className="flex w-[430px] items-center border border-[#c3c5c6] bg-[#f1f1f1] pl-[14px]">
        <svg viewBox="0 0 20 20" className="w-5 h-5" fill="none" stroke="#161616" strokeWidth="1.400">
          <circle cx="12.500" cy="7.500" r="6.500" />
          <path d="M8 12l-8 8" />
        </svg>
        <input
          aria-label="ここに入力して検索"
          placeholder="ここに入力して検索"
          className="ml-[15px] flex-1 bg-transparent text-[16px] outline-none placeholder:text-[#333]"
        />
      </label>
      <button aria-label="Cortana" className="flex w-[60px] items-center justify-center">
        <span className="w-5 h-5 rounded-full border-[3px] border-white" />
      </button>
      <button aria-label="Task View" className="flex w-[59px] items-center justify-center">
        <svg viewBox="0 0 22 20" className="w-[22px] h-5" fill="none" stroke="#fff" strokeWidth="1.300">
          <path d="M1 6h12v8H1zM1 0v3h12V0M1 20v-3h12v3M19 0v5M19 10v10" />
          <path d="M17.500 6h3v3h-3z" fill="#fff" stroke="none" />
        </svg>
      </button>
      <button aria-label="Store" className="flex w-[59px] items-center justify-center">
        <svg viewBox="0 0 28 30" className="w-7 h-[30px]">
          <path d="M7 9V1.500h14V9" fill="none" stroke="#e8e8e8" strokeWidth="2" />
          <path d="M0 8h28v22H0z" fill="#f5f5f5" />
          <path d="M9 14h5v5H9z" fill="#f25022" />
          <path d="M15 14h5v5h-5z" fill="#7fba00" />
          <path d="M9 20h5v5H9z" fill="#00a4ef" />
          <path d="M15 20h5v5h-5z" fill="#ffb900" />
        </svg>
      </button>
      <div className="flex min-w-0 flex-1">
        {TASKBAR_APPS.map((app) => (
          <button
            key={app.name}
            aria-label={app.name}
            className={`relative flex min-w-0 flex-1 items-center justify-center ${app.highlight ?? ""}`}
          >
            {app.icon}
            {app.mark && <span className={`absolute bottom-0 h-[3px] bg-[#76b9ed] ${app.mark}`} />}
          </button>
        ))}
      </div>
      <SystemTray />
    </footer>
  );
}

export default function App() {
  return (
    <div className="flex h-screen flex-col overflow-hidden bg-[#f3f3f3] font-['Roboto','Noto_Sans_CJK_JP',sans-serif]">
      {/* Browser chrome */}
      <div className="shrink-0 font-['Open_Sans','Noto_Sans_CJK_JP',sans-serif]">
        <TabStrip />
        <Toolbar />
        <BookmarksBar />
      </div>

      <AppHeader />
      <Breadcrumb />

      <main className="flex min-h-0 flex-1 text-[#161616]">
        <div className="flex min-w-0 flex-1 flex-col">
          {/* Title row */}
          <div className="flex h-[155px] shrink-0 items-start bg-white pl-[101px] pr-[81px] pt-[30px]">
            <h1 className="flex-1 text-[35px] font-light leading-[40px]">Mortgage Default Analysis</h1>
            <button aria-label="Category menu" className="mt-[10px] mr-[9px]"><OverflowIcon /></button>
            <div className="flex h-[60px] border-l-2 border-[#f1f1f1] pl-[21px]">
              <button className="w-[199px] bg-[#0f62fe] pl-4 pb-1 text-left text-[18px] text-white">エクスポート</button>
            </div>
          </div>
          <CategoryContent />
        </div>
        <AboutPanel />
      </main>
      <div className="h-[13px] shrink-0" />

      <div className="shrink-0 font-['Open_Sans','Noto_Sans_CJK_JP',sans-serif]">
        <Taskbar />
      </div>
    </div>
  );
}
